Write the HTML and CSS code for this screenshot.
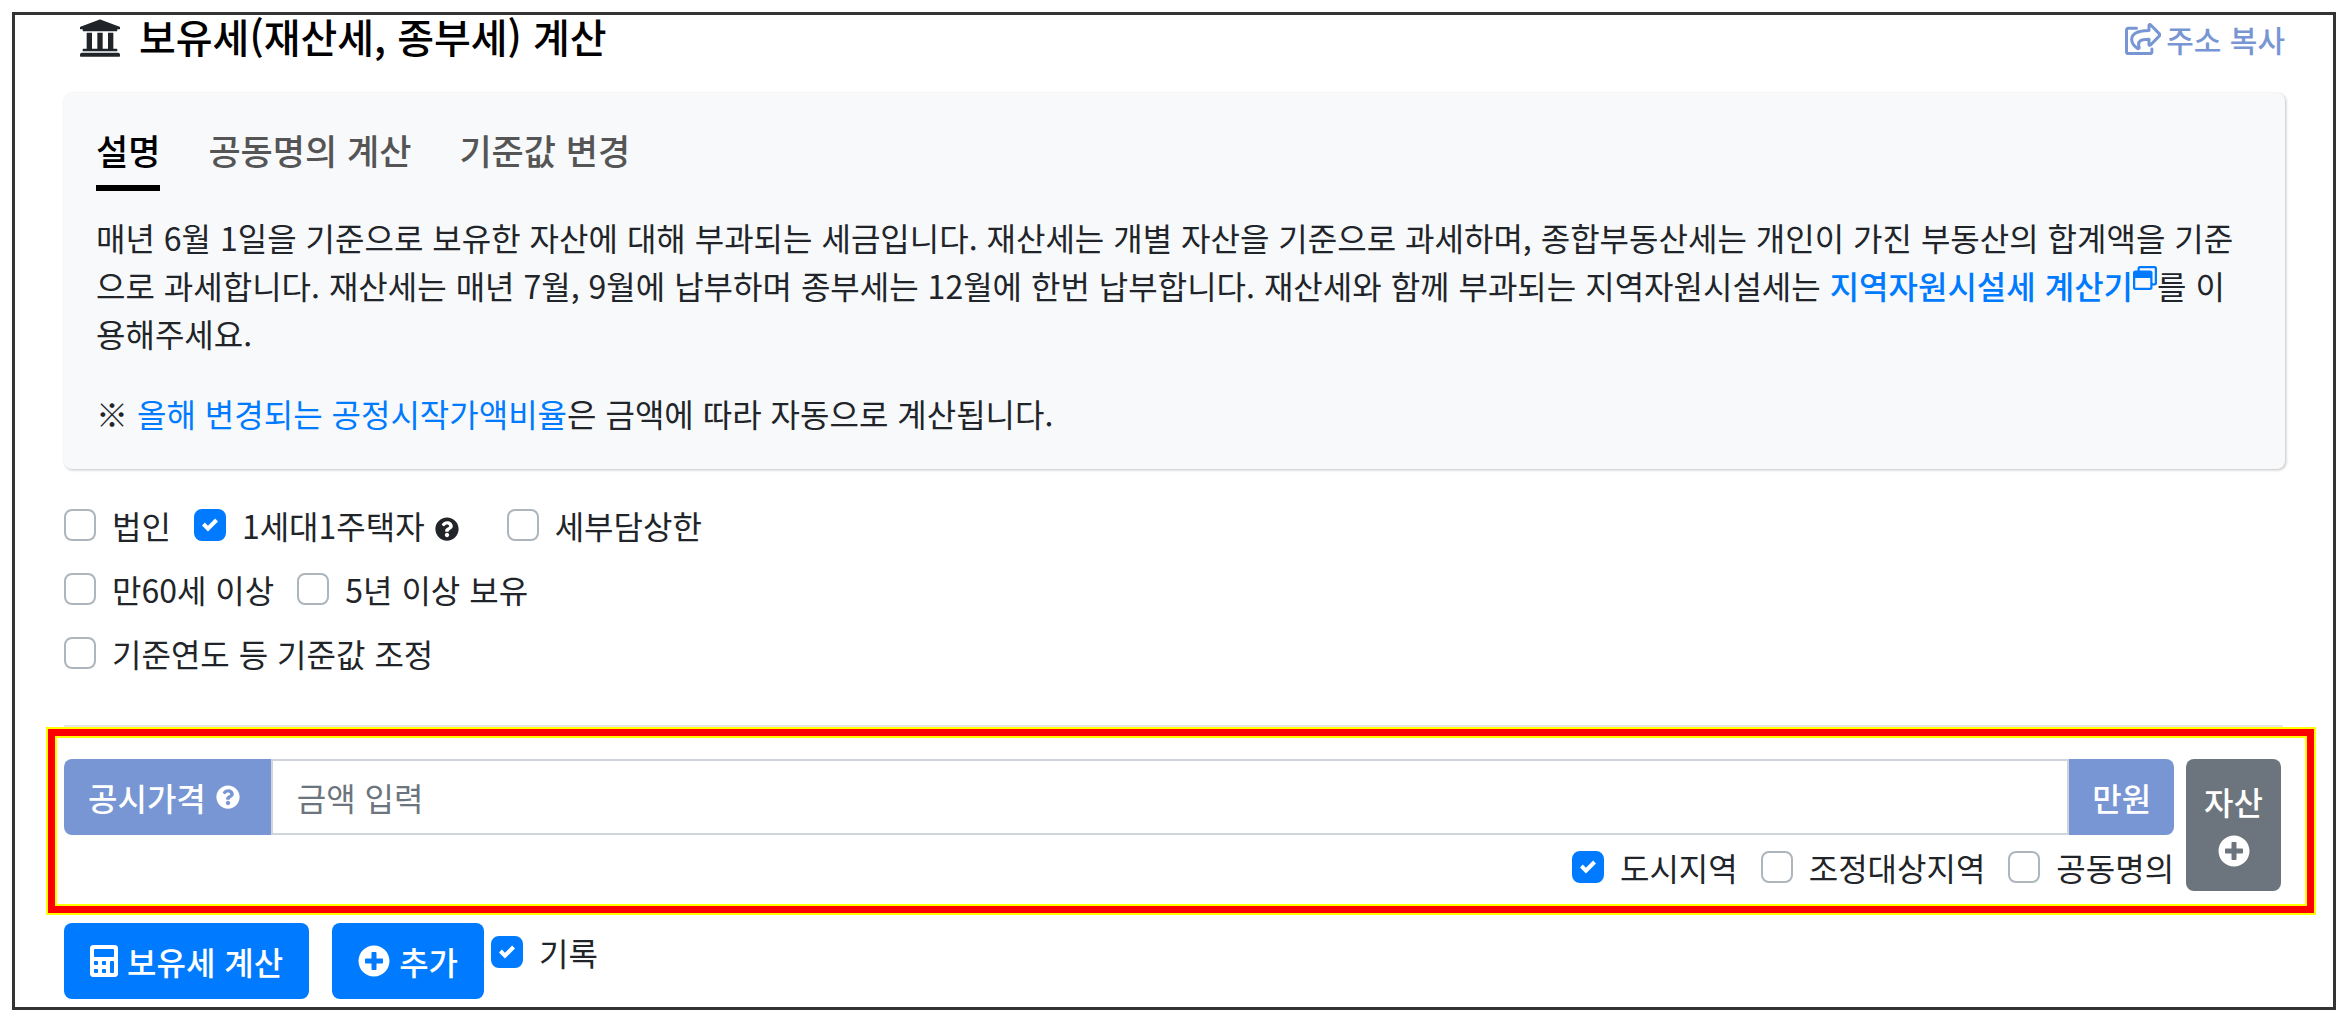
FILE: index.html
```html
<!DOCTYPE html>
<html lang="ko">
<head>
<meta charset="utf-8">
<meta name="viewport" content="width=device-width, initial-scale=1">
<title>보유세 계산</title>
<link rel="stylesheet" href="styles.css">
</head>
<body>
<svg class="sprite" aria-hidden="true">
  <symbol id="i-question" viewBox="0 0 512 512"><path d="M504 256c0 137-111 248-248 248S8 393 8 256 119 8 256 8s248 111 248 248zM262.700 90c-54.500 0-89.300 23-116.500 63.800-3.500 5.300-2.400 12.400 2.700 16.300l34.700 26.300c5.200 3.900 12.600 3 16.700-2.100 17.900-22.700 30.100-35.800 57.300-35.800 20.400 0 45.700 13.100 45.700 33 0 15-12.400 22.700-32.500 34C247.100 238.500 216 254.900 216 296v4c0 6.600 5.400 12 12 12h56c6.600 0 12-5.400 12-12v-1.300c0-28.500 83.200-29.600 83.200-106.700 0-58-60.200-102-116.500-102zM256 338c-25.400 0-46 20.600-46 46s20.600 46 46 46 46-20.600 46-46-20.600-46-46-46z"/></symbol>
  <symbol id="i-plus" viewBox="0 0 512 512"><path d="M256 8C119 8 8 119 8 256s111 248 248 248 248-111 248-248S393 8 256 8zm144 276c0 6.600-5.400 12-12 12h-92v92c0 6.600-5.400 12-12 12h-56c-6.600 0-12-5.400-12-12v-92h-92c-6.600 0-12-5.400-12-12v-56c0-6.600 5.400-12 12-12h92v-92c0-6.600 5.400-12 12-12h56c6.600 0 12 5.400 12 12v92h92c6.600 0 12 5.400 12 12v56z"/></symbol>
</svg>
<main class="page">
  <header class="page-head">
    <h1 class="title">
      <svg class="title-icon" viewBox="16 32 480 448" aria-hidden="true"><path d="M496 128v16a8 8 0 0 1-8 8h-24v12c0 6.627-5.373 12-12 12H60c-6.627 0-12-5.373-12-12v-12H24a8 8 0 0 1-8-8v-16a8 8 0 0 1 4.941-7.392l232-88a7.996 7.996 0 0 1 6.118 0l232 88A8 8 0 0 1 496 128zm-24 304H40c-13.255 0-24 10.745-24 24v16a8 8 0 0 0 8 8h464a8 8 0 0 0 8-8v-16c0-13.255-10.745-24-24-24zM96 192v192H60c-6.627 0-12 5.373-12 12v20h416v-20c0-6.627-5.373-12-12-12h-36V192h-64v192h-64V192h-64v192h-64V192H96z"/></svg>
      보유세(재산세, 종부세) 계산
    </h1>
    <a class="copy" href="#copy">
      <svg class="copy-icon" viewBox="0 0 36 32" aria-hidden="true"><path d="M11.500 5.200H3.200a1.700 1.700 0 0 0-1.700 1.700v22a1.700 1.700 0 0 0 1.700 1.700h22a1.700 1.700 0 0 0 1.700-1.700V26"/><path d="M24 2.400c0-.9.900-1.200 1.500-.6l8.900 9.100c.6.600.6 1.400 0 2l-8.900 9.100c-.6.600-1.500.3-1.500-.6v-5.200c-8 0-11.800 1.600-9.900 8 .4 1.300-.9 1.800-1.800 1.100C9.200 23 6.700 20 6.700 16.400 6.700 9.300 14 7.500 24 7.400z"/></svg>
      주소 복사
    </a>
  </header>

  <section class="card">
    <nav class="tabs">
      <a class="tab tab-active" href="#info">설명</a>
      <a class="tab" href="#joint">공동명의 계산</a>
      <a class="tab" href="#base">기준값 변경</a>
    </nav>
    <p class="text">매년 6월 1일을 기준으로 보유한 자산에 대해 부과되는 세금입니다. 재산세는 개별 자산을 기준으로 과세하며, 종합부동산세는 개인이 가진 부동산의 합계액을 기준으로 과세합니다. 재산세는 매년 7월, 9월에 납부하며 종부세는 12월에 한번 납부합니다. 재산세와 함께 부과되는 지역자원시설세는 <a class="link link-strong" href="#calc">지역자원시설세 계산기<svg class="window-icon" viewBox="0 0 512 512" aria-hidden="true"><path d="M464 0H144c-26.500 0-48 21.500-48 48v48H48c-26.500 0-48 21.500-48 48v320c0 26.500 21.500 48 48 48h320c26.500 0 48-21.500 48-48v-48h48c26.500 0 48-21.500 48-48V48c0-26.500-21.500-48-48-48zm-96 464H48V256h320v208zm96-96h-48V144c0-26.500-21.500-48-48-48H144V48h320v320z"/></svg></a>를 이용해주세요.</p>
    <p class="text">※ <a class="link" href="#ratio">올해 변경되는 공정시작가액비율</a>은 금액에 따라 자동으로 계산됩니다.</p>
  </section>

  <form class="form">
    <div class="options">
      <div class="row">
        <label class="check"><input type="checkbox">법인</label>
        <label class="check check-help"><input type="checkbox" checked>1세대1주택자<svg class="help-icon help-low" aria-hidden="true"><use href="#i-question"/></svg></label>
        <label class="check"><input type="checkbox">세부담상한</label>
      </div>
      <div class="row">
        <label class="check"><input type="checkbox">만60세 이상</label>
        <label class="check"><input type="checkbox">5년 이상 보유</label>
      </div>
      <div class="row">
        <label class="check"><input type="checkbox">기준연도 등 기준값 조정</label>
      </div>
    </div>

    <hr class="rule">
    <div class="highlight">
      <div class="asset">
        <div class="group">
          <label class="addon addon-start" for="price">공시가격<svg class="help-icon" aria-hidden="true"><use href="#i-question"/></svg></label>
          <input class="amount" id="price" type="text" placeholder="금액 입력">
          <span class="addon addon-end">만원</span>
        </div>
        <div class="row row-end">
          <label class="check"><input type="checkbox" checked>도시지역</label>
          <label class="check"><input type="checkbox">조정대상지역</label>
          <label class="check"><input type="checkbox">공동명의</label>
        </div>
      </div>
      <button class="btn btn-asset" type="button">자산<svg class="plus-icon" aria-hidden="true"><use href="#i-plus"/></svg></button>
    </div>

    <div class="actions">
      <button class="btn" type="button"><svg class="calc-icon" viewBox="0 0 448 512" aria-hidden="true"><path d="M400 0H48C22.400 0 0 22.400 0 48v416c0 25.600 22.400 48 48 48h352c25.600 0 48-22.400 48-48V48c0-25.600-22.400-48-48-48zM128 435.200c0 6.400-6.400 12.800-12.800 12.800H76.800c-6.400 0-12.800-6.400-12.800-12.800v-38.400c0-6.400 6.400-12.800 12.800-12.800h38.400c6.400 0 12.800 6.400 12.800 12.800v38.400zm0-128c0 6.400-6.400 12.800-12.800 12.800H76.800c-6.400 0-12.800-6.400-12.800-12.800v-38.400c0-6.400 6.400-12.800 12.800-12.800h38.400c6.400 0 12.800 6.400 12.800 12.800v38.400zm128 128c0 6.400-6.400 12.800-12.800 12.800h-38.400c-6.400 0-12.800-6.400-12.800-12.800v-38.400c0-6.400 6.400-12.800 12.800-12.800h38.400c6.400 0 12.800 6.400 12.800 12.800v38.400zm0-128c0 6.400-6.400 12.800-12.800 12.800h-38.400c-6.400 0-12.800-6.400-12.800-12.800v-38.400c0-6.400 6.400-12.800 12.800-12.800h38.400c6.400 0 12.800 6.400 12.800 12.800v38.400zm128 128c0 6.400-6.400 12.800-12.800 12.800h-38.400c-6.400 0-12.800-6.400-12.800-12.800V268.800c0-6.400 6.400-12.800 12.800-12.800h38.400c6.400 0 12.800 6.400 12.800 12.800v166.400zm0-256c0 6.400-6.400 12.800-12.800 12.800H76.800c-6.400 0-12.800-6.400-12.800-12.800V76.800C64 70.400 70.400 64 76.800 64h294.400c6.400 0 12.800 6.400 12.800 12.800v102.400z"/></svg>보유세 계산</button>
      <button class="btn btn-add" type="button"><svg class="plus-icon" aria-hidden="true"><use href="#i-plus"/></svg>추가</button>
      <label class="check"><input type="checkbox" checked>기록</label>
    </div>
  </form>
</main>
</body>
</html>
```
FILE: styles.css
```css
* { box-sizing: border-box; }

body {
  margin: 12px 10px 12px 12px;
  background: #fff;
  color: #212529;
  font: 400 32px/48px "Noto Sans CJK KR", sans-serif;
}

svg { fill: currentColor; flex: none; }
.sprite { display: none; }

.page {
  border: 3px solid #333;
  padding: 0 48px 8px 49px;
}

.page-head {
  display: flex;
  justify-content: space-between;
  align-items: center;
  height: 48px;
  padding-left: 16px;
}

.title {
  display: flex;
  align-items: flex-start;
  gap: 19px;
  margin: 0 0 6px;
  color: #000;
  font-size: 40px;
  font-weight: 500;
  line-height: 48px;
}

.title-icon { width: 40px; height: 40px; margin-top: 6px; color: #212529; }

.copy {
  display: flex;
  align-items: center;
  gap: 5px;
  color: #7796d3;
  font-size: 30px;
  font-weight: 500;
  text-decoration: none;
}

.copy-icon {
  width: 36px;
  height: 32px;
  fill: none;
  stroke: currentColor;
  stroke-width: 3;
  stroke-linecap: round;
  stroke-linejoin: round;
}

.card {
  margin-top: 30px;
  padding: 31px 32px 32px;
  border-radius: 8px;
  background: #f8f9fb;
  box-shadow: 1px 1px 3px rgba(0, 0, 0, .25);
}

.tabs { display: flex; gap: 48px; margin-bottom: 22px; }

.tab {
  padding-bottom: 9px;
  border-bottom: 6px solid transparent;
  color: #555;
  font-size: 35px;
  font-weight: 500;
  line-height: 52px;
  text-decoration: none;
}

.tab-active { color: #000; border-color: #000; }

.text { margin: 0 0 32px; }
.text:last-child { margin-bottom: 0; }

.link { color: #007bff; text-decoration: none; }
.link-strong { font-weight: 500; }
.window-icon { width: 24px; height: 24px; vertical-align: 9px; }

.options {
  display: flex;
  flex-direction: column;
  gap: 16px;
  margin-top: 32px;
}

.row { display: flex; flex-wrap: wrap; gap: 23px; }
.row-end { justify-content: flex-end; }

.check { display: flex; align-items: center; }
.check-help { margin-right: 25px; }

.check input {
  appearance: none;
  width: 32px;
  height: 32px;
  margin: 0 16px 0 0;
  border: 2px solid #adb5bd;
  border-radius: 8px;
  background: #fff;
}

.check input:checked {
  border-color: #007bff;
  background: #007bff url("data:image/svg+xml,%3Csvg xmlns='http://www.w3.org/2000/svg' viewBox='0 0 8 8'%3E%3Cpath fill='%23fff' d='M6.564.750l-3.590 3.612-1.538-1.550L0 4.260l2.974 2.990L8 2.193z'/%3E%3C/svg%3E") center / 16px 16px no-repeat;
}

.help-icon { width: 24px; height: 24px; margin-left: 10px; }
.help-low { margin-top: 8px; }

.rule {
  height: 2px;
  margin: 48px 2px 0 0;
  border: 0;
  background: #e5e5e5;
}

.highlight {
  display: flex;
  gap: 12px;
  margin: 2px -29px 0 -16px;
  padding: 23px 26px 15px 9px;
  border: 7px solid #f00;
  box-shadow: 0 0 0 2px #ff0, inset 0 0 0 2px #ff0;
}

.asset { flex: 1; min-width: 0; }

.group { display: flex; height: 76px; margin-bottom: 8px; }

.addon {
  display: flex;
  align-items: center;
  background: #7796d3;
  color: #fff;
  font-weight: 500;
}

.addon-start { padding: 0 31px 0 24px; border-radius: 8px 0 0 8px; }
.addon-end { padding: 0 23px; border-radius: 0 8px 8px 0; }

.amount {
  flex: 1;
  min-width: 0;
  padding: 0 24px;
  border: 2px solid #ced4da;
  background: #fff;
  color: #495057;
  font: inherit;
}

.amount::placeholder { color: #6c757d; opacity: 1; }

.btn {
  display: flex;
  align-items: center;
  gap: 9px;
  height: 76px;
  padding: 0 26px;
  border: 0;
  border-radius: 8px;
  background: #007bff;
  color: #fff;
  font: inherit;
  font-weight: 500;
}

.btn-asset {
  flex-direction: column;
  justify-content: center;
  gap: 10px;
  height: 132px;
  padding: 0 18px 6px;
  background: #6c757d;
}

.btn-add { margin-left: 23px; }

.plus-icon { width: 32px; height: 32px; }
.calc-icon { width: 28px; height: 32px; }

.actions {
  display: flex;
  align-items: flex-start;
  margin-top: 10px;
}

.actions .check { margin: 5px 0 0 7px; }
```
